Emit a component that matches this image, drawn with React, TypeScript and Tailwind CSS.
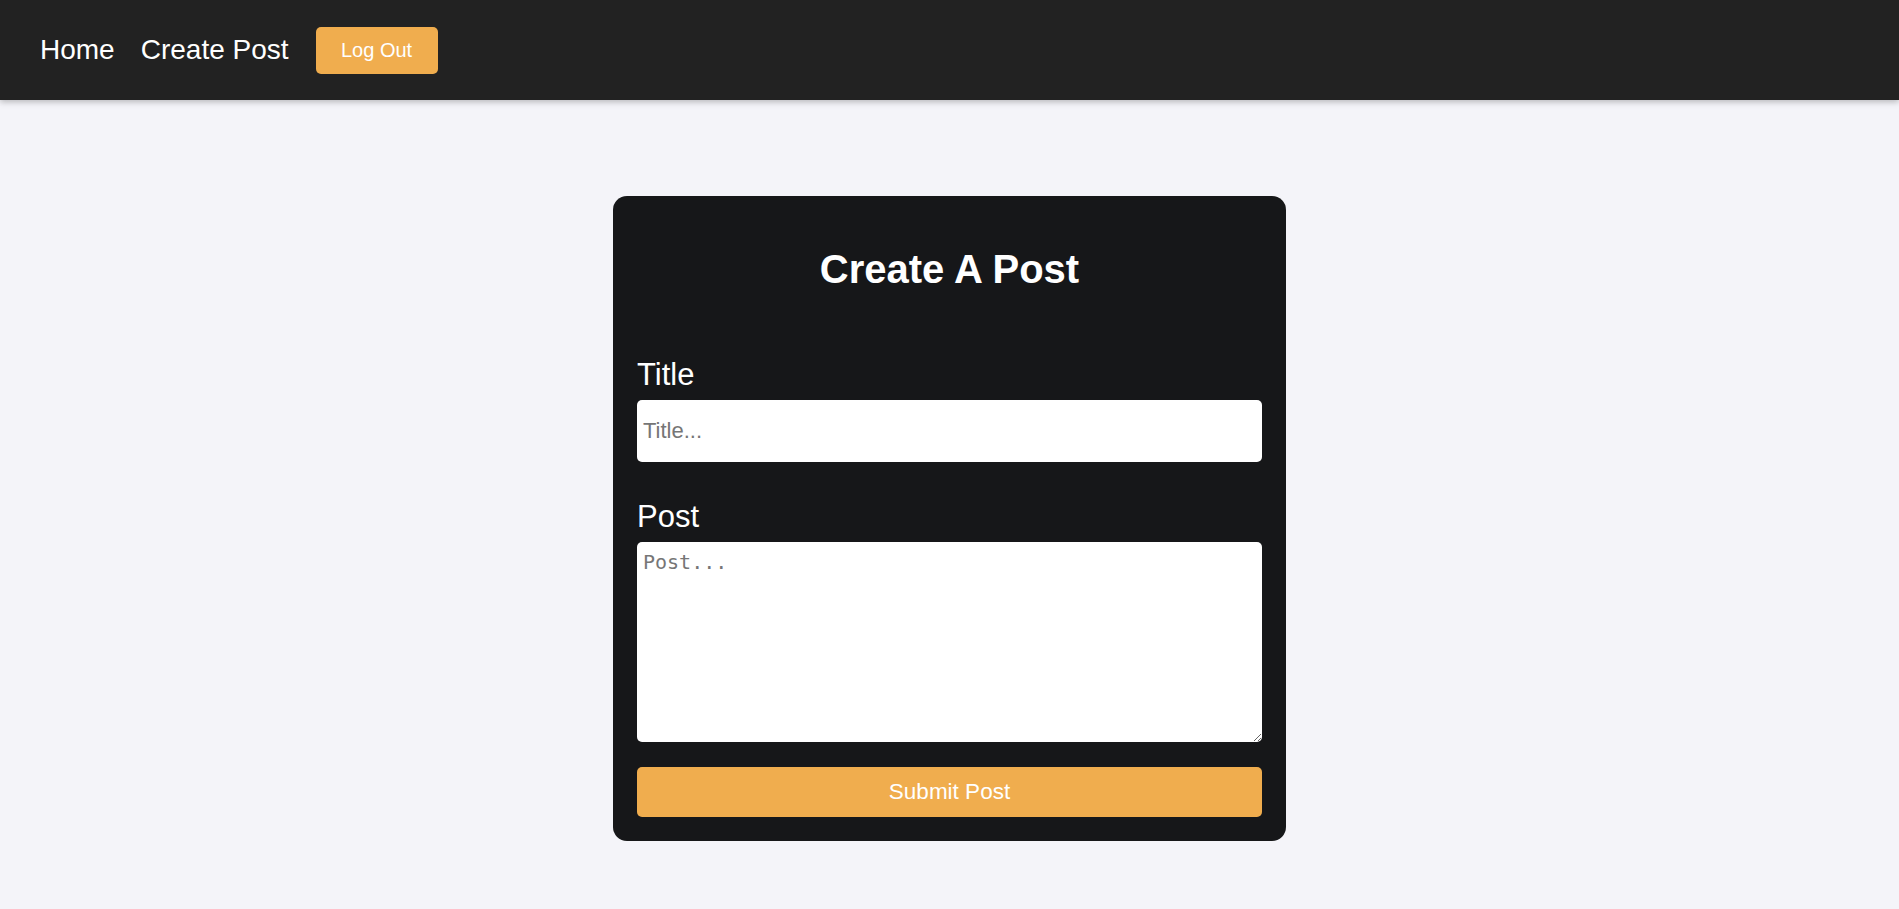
import { useState } from 'react'

const font = { fontFamily: '"Liberation Sans", Arial, sans-serif' }

const Navbar = () => (
  <nav className="flex h-[100px] items-center bg-[#222222] pl-[40px] shadow-[0_2px_6px_rgba(0,0,0,0.25)]">
    <a href="#" className="text-[28px] leading-none text-white">
      Home
    </a>
    <a href="#" className="ml-[26px] text-[28px] leading-none text-white">
      Create Post
    </a>
    <button className="ml-[27px] h-[47px] w-[122px] rounded-[5px] bg-[#f0ad4e] text-[20px] text-white">
      Log Out
    </button>
  </nav>
)

export default function App() {
  const [title, setTitle] = useState('')
  const [post, setPost] = useState('')

  return (
    <div className="min-h-[909px] bg-[#f4f4f9]" style={font}>
      <Navbar />
      <main className="flex justify-center pt-[96px]">
        <div className="flex w-[673px] flex-col rounded-[14px] bg-[#161719] p-[24px]">
          <h1 className="mt-[27px] text-center text-[40px] font-bold leading-[45px] text-white">
            Create A Post
          </h1>
          <label className="mt-[65px] text-[31px] leading-[35px] text-white">
            Title
          </label>
          <input
            value={title}
            onChange={(e) => setTitle(e.target.value)}
            placeholder="Title..."
            className="mt-[8px] h-[62px] rounded-[5px] bg-white px-[6px] text-[22px] text-black outline-none placeholder:text-[#767676]"
          />
          <label className="mt-[37px] text-[31px] leading-[35px] text-white">
            Post
          </label>
          <textarea
            value={post}
            onChange={(e) => setPost(e.target.value)}
            placeholder="Post..."
            className="mt-[8px] h-[200px] rounded-[5px] bg-white px-[6px] py-[5px] text-[20px] text-black outline-none placeholder:text-[#767676]"
            style={{ fontFamily: '"DejaVu Sans Mono", monospace' }}
          />
          <button className="mt-[25px] h-[50px] rounded-[5px] bg-[#f0ad4e] text-[22.5px] text-white">
            Submit Post
          </button>
        </div>
      </main>
    </div>
  )
}
